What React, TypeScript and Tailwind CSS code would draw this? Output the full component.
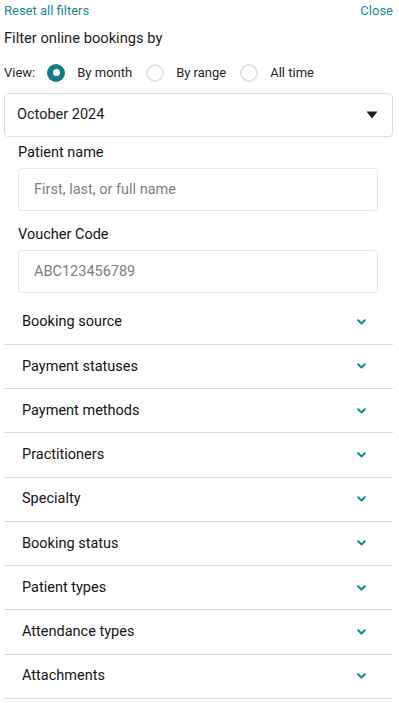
import React, { useState } from "react";

const sections = [
  "Booking source",
  "Payment statuses",
  "Payment methods",
  "Practitioners",
  "Specialty",
  "Booking status",
  "Patient types",
  "Attendance types",
  "Attachments",
];

function Radio({ checked, label, onClick }: { checked: boolean; label: string; onClick: () => void }) {
  return (
    <button type="button" onClick={onClick} className="flex items-center gap-[12px]">
      {checked ? (
        <span className="flex h-[18px] w-[18px] items-center justify-center rounded-full bg-[#137f85]">
          <span className="h-[7px] w-[7px] rounded-full bg-white" />
        </span>
      ) : (
        <span className="h-[18px] w-[18px] rounded-full border-2 border-[#dde3e6] bg-white" />
      )}
      <span className="text-[13px] text-[#22272b]">{label}</span>
    </button>
  );
}

function Chevron() {
  return (
    <svg width="9" height="6" viewBox="0 0 9 6" fill="none">
      <path d="M1.2 1.2L4.5 4.5L7.8 1.2" stroke="#158a8f" strokeWidth="2" strokeLinecap="round" strokeLinejoin="round" />
    </svg>
  );
}

export default function App() {
  const [view, setView] = useState("month");
  const [open, setOpen] = useState<string | null>(null);

  return (
    <div className="min-h-screen bg-white pb-4 pl-[4px] pr-[6px] text-[#1a1e22] [font-family:Roboto,'Noto_Sans',sans-serif]">
      {/* header links */}
      <div className="flex items-center justify-between pt-[2px] text-[13px] leading-[18px] text-[#1b8b90]">
        <button type="button">Reset all filters</button>
        <button type="button">Close</button>
      </div>

      <h2 className="mt-[9px] text-[14.7px] leading-[18px] text-[#1a1e22]">Filter online bookings by</h2>

      {/* view */}
      <div className="mt-[16px] flex items-center gap-[12px]">
        <span className="text-[13px] text-[#22272b]">View:</span>
        <div className="flex items-center gap-[14px]">
          <Radio checked={view === "month"} label="By month" onClick={() => setView("month")} />
          <Radio checked={view === "range"} label="By range" onClick={() => setView("range")} />
          <Radio checked={view === "all"} label="All time" onClick={() => setView("all")} />
        </div>
      </div>

      {/* month select */}
      <div className="mt-[10px] flex h-[44px] items-center justify-between rounded-[4px] border border-[#d9dee2] pl-[12px] pr-[14px]">
        <span className="text-[14.5px] text-[#1a1e22]">October 2024</span>
        <svg width="12" height="8" viewBox="0 0 12 8">
          <path d="M0.5 0.5H11.5L6 7.5Z" fill="#1a2126" />
        </svg>
      </div>

      <div className="pl-[14px] pr-[15px]">
        <label className="mt-[6px] block text-[14.5px] leading-[20px] text-[#111518]">Patient name</label>
        <input
          className="mt-[5px] block h-[43px] w-full rounded-[4px] border border-[#e1e6ea] px-[15px] text-[14.5px] outline-none placeholder:text-[#7a7f83]"
          placeholder="First, last, or full name"
        />
        <label className="mt-[14px] block text-[14.5px] leading-[20px] text-[#111518]">Voucher Code</label>
        <input
          className="mt-[5px] block h-[43px] w-full rounded-[4px] border border-[#e1e6ea] px-[15px] text-[14.5px] outline-none placeholder:text-[#7a7f83]"
          placeholder="ABC123456789"
        />
      </div>

      <div className="mt-[8px]">
        {sections.map((s) => (
          <button
            key={s}
            type="button"
            onClick={() => setOpen(open === s ? null : s)}
            className="flex h-[44.25px] w-full items-center justify-between border-b border-[#d6dce0] pl-[18px] pr-[27px] text-left"
          >
            <span className="text-[14.5px] text-[#111518]">{s}</span>
            <Chevron />
          </button>
        ))}
      </div>
    </div>
  );
}
